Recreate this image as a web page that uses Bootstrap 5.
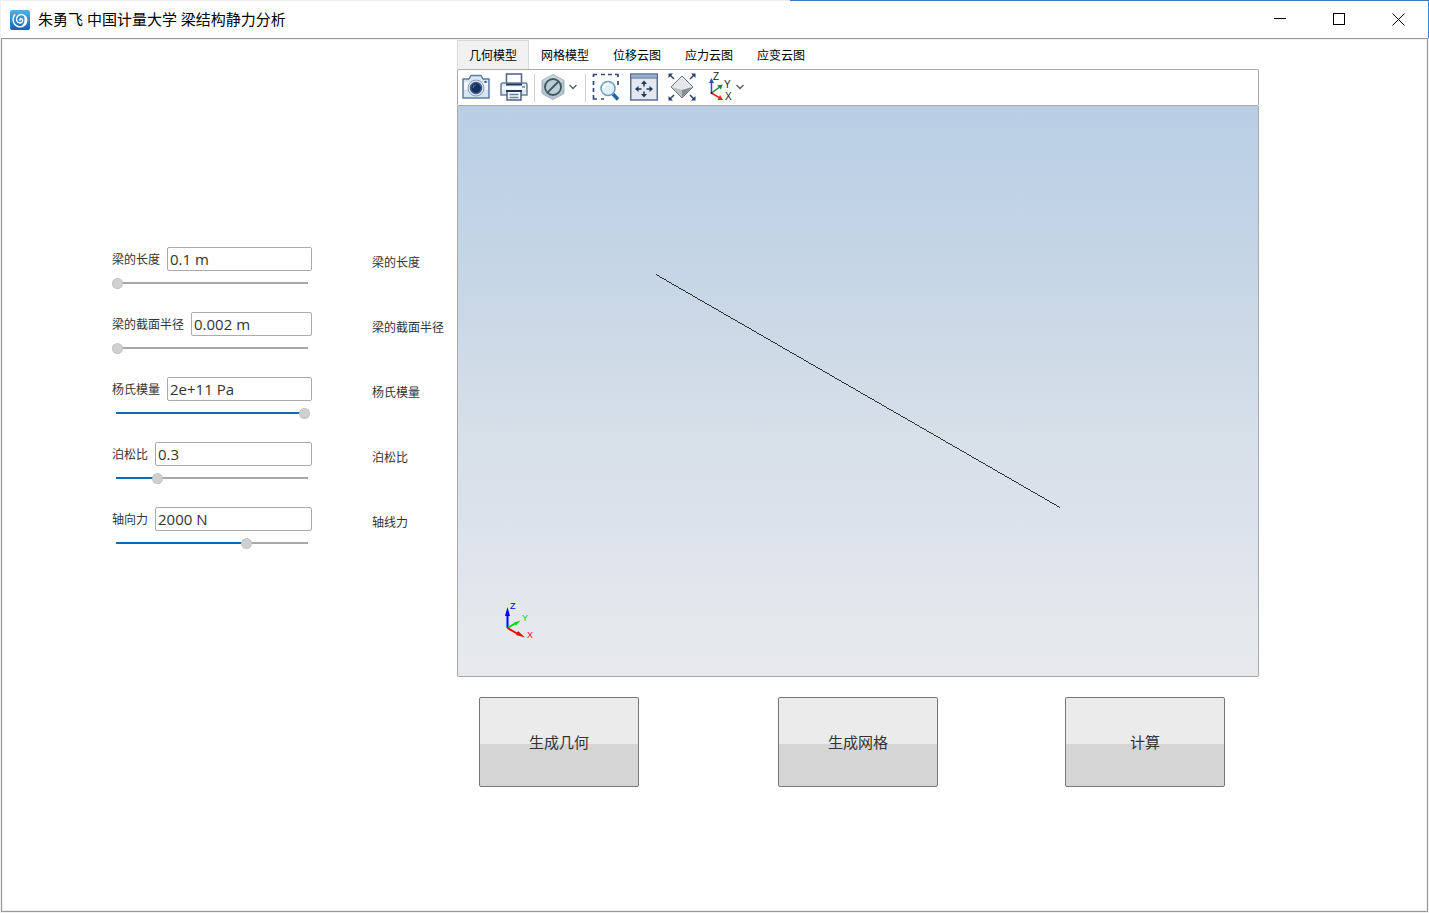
<!DOCTYPE html>
<html lang="zh-CN">
<head>
<meta charset="utf-8">
<meta name="viewport" content="width=device-width, initial-scale=1">
<title>梁结构静力分析</title>
<link href="https://cdn.jsdelivr.net/npm/bootstrap@5.3.0/dist/css/bootstrap.min.css" rel="stylesheet">
<style>
  body {
    font-family: "Open Sans", "Noto Sans CJK SC", sans-serif;
    font-size: 12px; line-height: 24px; color: #333;
    background: #f0f0f0;
    border-top: 1px solid; border-image: linear-gradient(90deg, #ececec 55.3%, #3f78bd 55.3%) 1;
    padding: 0 1px 1px;
  }
  button { color: inherit; }
  .titlebar { height: 37px; color: #000; font-size: 15px; padding-left: 9px; box-shadow: 1px 0 #3f86cc; }
  .app-title { padding-bottom: 2px; }
  .winbtn { width: 59px; }
  .client { border: 1px solid #999; box-shadow: inset 0 0 0 1px #f0f0f0; }

  .inputs { padding: 208px 0 0 110px; width: 310px; }
  .param { height: 65px; }
  .param label { line-height: 26px; height: 24px; margin-right: 7px; }
  .param .form-control {
    height: 24px; padding: 0 2px; font-size: 15px; line-height: 20px;
    color: #333; border-color: #ababab; border-radius: 2px; min-width: 0;
  }
  .slider {
    appearance: none; display: block; width: 100%; height: 12px; margin: 6px 0 0;
    background: linear-gradient(90deg, #0f68b8 var(--v), #a8a8a8 var(--v)) center / calc(100% - 8px) 2px no-repeat;
  }
  .slider::-webkit-slider-thumb {
    appearance: none; width: 11px; height: 11px; border-radius: 50%;
    background: #d0d0d0; border: 1px dotted #b4b4b4;
  }
  .slider::-moz-range-thumb { width: 9px; height: 9px; background: #d0d0d0; border: 1px dotted #b4b4b4; }
  .captions { padding: 212px 0 0 60px; width: 145px; }

  .viewer { margin-right: 168px; min-width: 0; }
  .tabs { padding-top: 1px; }
  .tabs .nav-link {
    height: 29px; width: 72px; padding: 2px 0 0; color: #000; background: none;
    border: 1px solid transparent; border-bottom: 0; border-radius: 0;
  }
  .tabs .nav-link.active { background: #f1f1f1; border-color: #d9d9d9; color: #000; }
  .toolbar { height: 36px; border: 1px solid #ababab; border-bottom: 0; border-radius: 2px 2px 0 0; }
  .tool { width: 38px; height: 33px; padding: 0 2px 0 0; }
  .tool-menu { width: 50px; gap: 4px; }
  .divider { width: 1px; height: 28px; background: #d0d0d0; align-self: center; }
  .divider ~ .divider { margin-right: 2px; }
  .scene {
    border: 1px solid #a8a8a8; border-radius: 2px;
    background: linear-gradient(#b9cee5 0, #c8d7e6 33%, #d7dfe8 58%, #dfe4ed 80%, #e5e9ec 92%, #e8e9ed 100%);
  }
  .actions { display: grid; grid-template-columns: 299fr 287fr 160px; padding: 20px 34px 0 22px; }
  .action {
    width: 160px; height: 90px; font-size: 15px; color: #333;
    border: 1px solid #777; border-radius: 2px;
    background: linear-gradient(#ebebeb 52%, #d5d5d5 52%);
  }
</style>
</head>
<body class="d-flex flex-column min-vh-100">

<header class="titlebar bg-white d-flex align-items-center">
  <svg width="20" height="20" viewBox="0 0 20 20" class="flex-shrink-0" aria-hidden="true">
    <defs><linearGradient id="logo" x2="0" y2="1"><stop stop-color="#4db2ea"/><stop offset="1" stop-color="#1263b4"/></linearGradient></defs>
    <rect width="20" height="20" rx="2" fill="url(#logo)"/>
    <path d="M4.800 4.800C2 8 2.600 14.500 8 16.500C13 18 17.300 14 16.600 9C15.800 4.600 10.500 3.200 7.600 6.200C5.400 9 6.600 12.800 9.800 13C12.800 13 13.600 9.800 11.600 8.900C10.300 8.500 9.300 9.600 10 10.600" fill="none" stroke="#fff" stroke-width="1.400" stroke-linecap="round"/>
    <path d="M13.500 5C18.500 8 17.500 15.500 11 16.700C14.500 14 15.500 9.500 13.500 5Z" fill="#fff"/>
  </svg>
  <span class="app-title text-truncate ms-1 ps-1 pe-2">朱勇飞 中国计量大学 梁结构静力分析</span>
  <div class="ms-auto d-flex h-100">
    <button type="button" class="winbtn border-0 bg-transparent p-0 d-flex align-items-center justify-content-center" aria-label="最小化"><svg width="13" height="13" shape-rendering="crispEdges"><path d="M0 5.500H12" stroke="#000"/></svg></button>
    <button type="button" class="winbtn border-0 bg-transparent p-0 d-flex align-items-center justify-content-center" aria-label="最大化"><svg width="13" height="13" shape-rendering="crispEdges"><path d="M.5 .5H11.500V11.500H.5Z" stroke="#000" fill="none"/></svg></button>
    <button type="button" class="winbtn border-0 bg-transparent p-0 d-flex align-items-center justify-content-center" aria-label="关闭"><svg width="13" height="13"><path d="M.5 .5L12.500 12.500M12.500 .5L.5 12.500" stroke="#000"/></svg></button>
  </div>
</header>

<main class="client bg-white flex-grow-1 d-flex">
  <form class="inputs flex-shrink-0">
    <div class="param">
      <div class="d-flex"><label for="len" class="text-nowrap">梁的长度</label><input id="len" class="form-control flex-grow-1" value="0.1 m"></div>
      <input type="range" class="slider" aria-label="梁的长度" value="0" style="--v:0%">
    </div>
    <div class="param">
      <div class="d-flex"><label for="rad" class="text-nowrap">梁的截面半径</label><input id="rad" class="form-control flex-grow-1" value="0.002 m"></div>
      <input type="range" class="slider" aria-label="梁的截面半径" value="0" style="--v:0%">
    </div>
    <div class="param">
      <div class="d-flex"><label for="young" class="text-nowrap">杨氏模量</label><input id="young" class="form-control flex-grow-1" value="2e+11 Pa"></div>
      <input type="range" class="slider" aria-label="杨氏模量" value="99" style="--v:99%">
    </div>
    <div class="param">
      <div class="d-flex"><label for="poisson" class="text-nowrap">泊松比</label><input id="poisson" class="form-control flex-grow-1" value="0.3"></div>
      <input type="range" class="slider" aria-label="泊松比" value="21" style="--v:21%">
    </div>
    <div class="param">
      <div class="d-flex"><label for="force" class="text-nowrap">轴向力</label><input id="force" class="form-control flex-grow-1" value="2000 N"></div>
      <input type="range" class="slider" aria-label="轴向力" value="68" style="--v:68%">
    </div>
  </form>

  <div class="captions flex-shrink-0 text-nowrap">
    <div class="param">梁的长度</div>
    <div class="param">梁的截面半径</div>
    <div class="param">杨氏模量</div>
    <div class="param">泊松比</div>
    <div class="param">轴线力</div>
  </div>

  <section class="viewer flex-grow-1">
    <nav class="tabs nav">
      <button type="button" class="nav-link active">几何模型</button>
      <button type="button" class="nav-link">网格模型</button>
      <button type="button" class="nav-link">位移云图</button>
      <button type="button" class="nav-link">应力云图</button>
      <button type="button" class="nav-link">应变云图</button>
    </nav>

    <div class="toolbar d-flex align-items-start">
      <button type="button" class="tool border-0 bg-transparent d-flex align-items-center justify-content-center" aria-label="快照">
        <svg width="28" height="28" viewBox="0 0 28 28">
          <path d="M1 6H7L9 2.500H19L21 6H27V25H1Z" fill="#d8e5f2" stroke="#5f7ba0" stroke-width="1.500" stroke-linejoin="round"/>
          <path d="M2 13H26" stroke="#f5f9fc" stroke-width="7"/>
          <rect x="22.500" y="8" width="2" height="2" fill="#2c4b7a"/>
          <circle cx="14" cy="15" r="8" fill="#dfe7ef" stroke="#8a9db5"/>
          <circle cx="14" cy="15" r="5.500" fill="#14305f" stroke="#3f5d88" stroke-width="1.500"/>
          <path d="M11 15A3 3 0 0 1 14 12" stroke="#5f7ba5" fill="none"/>
        </svg>
      </button>
      <button type="button" class="tool border-0 bg-transparent d-flex align-items-center justify-content-center" aria-label="打印">
        <svg width="28" height="28" viewBox="0 0 28 28">
          <path d="M6.500 11V1H21.500V11" fill="#fff" stroke="#4a6189" stroke-width="1.500"/>
          <path d="M1 12Q1 10 3 10H25Q27 10 27 12V22H1Z" fill="#e3e9f0" stroke="#6b7f9f" stroke-width="1.500"/>
          <path d="M6 11.500H22" stroke="#23395f" stroke-width="2"/>
          <path d="M2 15H26" stroke="#fff" stroke-width="3"/>
          <path d="M22 14H25" stroke="#24416f"/>
          <path d="M7 18H21V27H7Z" fill="#f7f9fb" stroke="#4a6189" stroke-width="1.500"/>
          <path d="M6 18H22" stroke="#23395f" stroke-width="2"/>
          <path d="M9.500 21.500H18.500M9.500 24.500H18.500" stroke="#6d7f9b" stroke-width="1.500"/>
        </svg>
      </button>
      <span class="divider"></span>
      <button type="button" class="tool tool-menu border-0 bg-transparent d-flex align-items-center justify-content-center" aria-label="裁剪">
        <svg width="24" height="28" viewBox="0 0 24 28">
          <path d="M12 1.500L23 7.500V20.500L12 26.500L1 20.500V7.500Z" fill="#b3c4cd" stroke="#9db2bd"/>
          <path d="M12 2L22.500 8L12 14L1.500 8Z" fill="#cad6dc"/>
          <circle cx="12" cy="14" r="8" fill="#bccdd4" stroke="#3f5963" stroke-width="1.800"/>
          <path d="M6.500 19.500L17.500 8.500" stroke="#3f5963" stroke-width="1.800"/>
        </svg>
        <svg width="8" height="8" viewBox="0 0 8 8"><path d="M.5 2L4 5.500L7.500 2" fill="none" stroke="#4e5c69" stroke-width="1.300"/></svg>
      </button>
      <span class="divider"></span>
      <button type="button" class="tool border-0 bg-transparent d-flex align-items-center justify-content-center" aria-label="框选缩放">
        <svg width="28" height="28" viewBox="0 0 28 28">
          <path d="M1.500 4V1.500H5M9 1.500H13M16 1.500H20M23 1.500H26V4M1.500 8V12M1.500 15V19M1.500 22V26H5M9 26H12M26 8V12" fill="none" stroke="#34497a" stroke-width="1.700"/>
          <path d="M21 21L26 26.500" stroke="#1d66a5" stroke-width="3.500"/>
          <circle cx="16" cy="15.500" r="7" fill="#e0f1fa" stroke="#6b9dc1" stroke-width="1.500"/>
          <path d="M11.500 15A5 5 0 0 1 17 10.500" stroke="#fff" stroke-width="2" fill="none"/>
        </svg>
      </button>
      <button type="button" class="tool border-0 bg-transparent d-flex align-items-center justify-content-center" aria-label="缩放至范围">
        <svg width="28" height="28" viewBox="0 0 28 28">
          <rect x=".75" y="1" width="26.500" height="26" fill="#e3e7ee" stroke="#5b6f92" stroke-width="1.500"/>
          <path d="M1.500 3H26.500" stroke="#8fafd0" stroke-width="2.500"/><path d="M1 5H27" stroke="#4c6187"/>
          <path d="M14 10V13.500M14 18.500V22M7 16H11.500M16.500 16H21" stroke="#213864" stroke-width="1.500"/>
          <path d="M14 7.500L17 11H11ZM14 24.500L17 21H11ZM5 16L8.500 13V19ZM23 16L19.500 13V19Z" fill="#213864"/>
        </svg>
      </button>
      <button type="button" class="tool border-0 bg-transparent d-flex align-items-center justify-content-center" aria-label="缩放至窗口">
        <svg width="28" height="28" viewBox="0 0 28 28">
          <path d="M14 3L25 14L14 25L3 14Z" fill="#e4e6e9" stroke="#6d7580"/>
          <path d="M3.500 14L14 17V24.500Z" fill="#babfc5"/><path d="M24.500 14L14 17V24.500Z" fill="#878d96"/>
          <path d="M2 2L6 6M26 2L22 6M2 26L6 22M26 26L22 22" stroke="#26406f" stroke-width="1.500"/>
          <path d="M.5 .5H5L.5 5ZM27.500 .5H23L27.500 5ZM.5 27.500H5L.5 23ZM27.500 27.500H23L27.500 23Z" fill="#26406f"/>
        </svg>
      </button>
      <button type="button" class="tool tool-menu border-0 bg-transparent d-flex align-items-center justify-content-center" aria-label="视图方向">
        <svg width="24" height="30" viewBox="0 0 24 30" font-family="Liberation Sans, sans-serif" font-size="10" fill="#222">
          <path d="M3.500 21V10" stroke="#2252b5" stroke-width="1.500"/><path d="M3.500 6L6 11H1Z" fill="#2252b5"/>
          <path d="M3.500 21L11 15.500" stroke="#168536" stroke-width="1.500"/><path d="M14.500 12.500L13 17.500L9 13.500Z" fill="#168536"/>
          <path d="M3.500 21L11 25.500" stroke="#ee2525" stroke-width="1.500"/><path d="M15 28L9.500 28L12 23Z" fill="#ee2525"/>
          <circle cx="3.500" cy="21" r="1" fill="#111"/>
          <text x="5" y="8">Z</text><text x="16" y="16">Y</text><text x="17" y="28">X</text>
        </svg>
        <svg width="8" height="8" viewBox="0 0 8 8"><path d="M.5 2L4 5.500L7.500 2" fill="none" stroke="#4e5c69" stroke-width="1.300"/></svg>
      </button>
    </div>

    <div class="scene">
      <svg class="d-block w-100" viewBox="0 0 800 570" role="img" aria-label="梁几何模型">
        <path d="M198 168.500L602 401.500" stroke="#000" stroke-width=".8" shape-rendering="crispEdges"/>
        <g stroke-width="2">
          <path d="M49.500 522V506" stroke="#00f"/><path d="M49.500 501L52 510H47Z" fill="#00f"/>
          <path d="M49.500 522L58 517" stroke="#00d800"/><path d="M62.500 514.500L58 519.500L56 516.500Z" fill="#00d800"/>
          <path d="M49.500 522L60 528" stroke="#f00"/><path d="M67 531.500L58 529L60 525Z" fill="#f00"/>
        </g>
        <g font-family="Liberation Sans, sans-serif" font-size="9">
          <text x="52" y="503" fill="#00f">Z</text><text x="64" y="515" fill="#00d800">Y</text><text x="69" y="532" fill="#f00">X</text>
        </g>
      </svg>
    </div>

    <div class="actions">
      <button type="button" class="action">生成几何</button>
      <button type="button" class="action">生成网格</button>
      <button type="button" class="action">计算</button>
    </div>
  </section>
</main>

<script src="https://cdn.jsdelivr.net/npm/bootstrap@5.3.0/dist/js/bootstrap.bundle.min.js"></script>
</body>
</html>
